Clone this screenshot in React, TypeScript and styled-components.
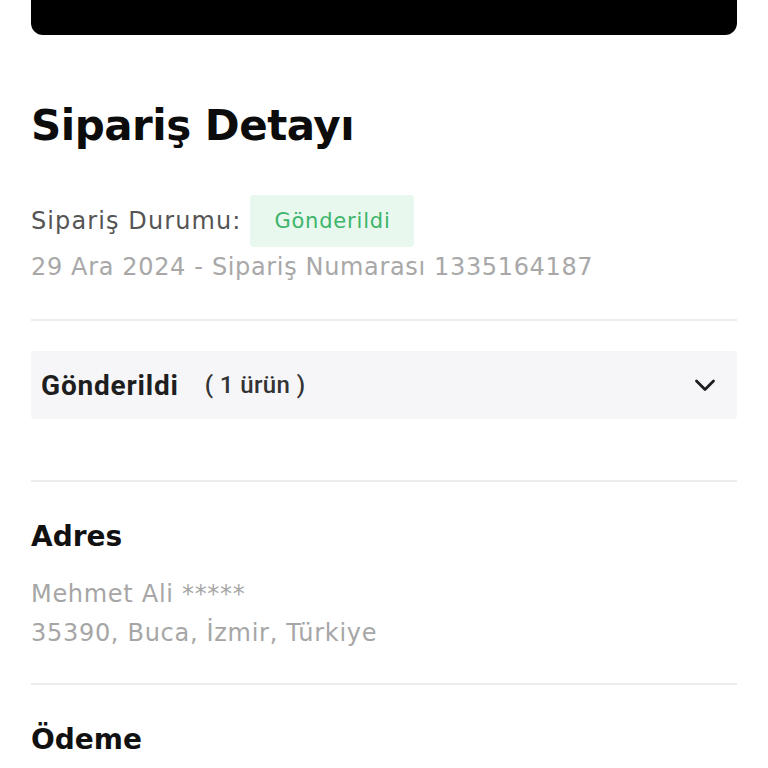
import styled, { createGlobalStyle } from "styled-components";

const GlobalStyle = createGlobalStyle`
  html, body {
    margin: 0;
    padding: 0;
    background: #ffffff;
    font-family: "DejaVu Sans", "Noto Sans", sans-serif;
  }
`;

export default () => {
  return (
    <Page>
      <GlobalStyle />
      <TopBar />
      <Title>Sipariş Detayı</Title>
      <StatusRow>
        <StatusLabel>Sipariş Durumu:</StatusLabel>
        <Badge>Gönderildi</Badge>
      </StatusRow>
      <MetaText>29 Ara 2024 - Sipariş Numarası 1335164187</MetaText>
      <Divider $top={34} />
      <Accordion>
        <AccordionTitle>
          Gönderildi
          <Count>( 1 ürün )</Count>
        </AccordionTitle>
        <svg width="24" height="24" viewBox="0 0 24 24" fill="none">
          <path
            d="M3.5 8L12 16.5L20.5 8"
            stroke="#1e1e1e"
            strokeWidth="2.8"
            strokeLinecap="round"
            strokeLinejoin="round"
          />
        </svg>
      </Accordion>
      <Divider $top={61} />
      <SectionTitle>Adres</SectionTitle>
      <Lines>
        <GrayText>Mehmet Ali *****</GrayText>
        <GrayText>35390, Buca, İzmir, Türkiye</GrayText>
      </Lines>
      <Divider $top={30} />
      <SectionTitle>Ödeme</SectionTitle>
    </Page>
  );
};

const Page = styled.div`
  display: flex;
  flex-direction: column;
  padding: 0 31px;
  height: 768px;
  overflow: hidden;
`;

const TopBar = styled.div`
  height: 35px;
  background: #000;
  border-radius: 0 0 12px 12px;
`;

const Title = styled.h1`
  margin: 64px 0 0;
  font-size: 42px;
  line-height: 54px;
  font-weight: 700;
  color: #0c0c0c;
  letter-spacing: -0.5px;
`;

const StatusRow = styled.div`
  display: flex;
  align-items: center;
  gap: 9px;
  margin-top: 42px;
`;

const StatusLabel = styled.span`
  font-size: 24px;
  letter-spacing: 1.1px;
  color: #555;
`;

const Badge = styled.span`
  display: inline-flex;
  align-items: center;
  justify-content: center;
  width: 164px;
  height: 52px;
  border-radius: 4px;
  background: #e8f8ee;
  color: #3db56a;
  font-size: 21px;
  letter-spacing: 0.8px;
`;

const MetaText = styled.div`
  font-size: 24px;
  line-height: 36px;
  letter-spacing: 0.65px;
  color: #a8a8a8;
  margin-top: 2px;
`;

const Divider = styled.div<{ $top: number }>`
  height: 2px;
  background: #ececec;
  margin-top: ${p => p.$top}px;
`;

const Accordion = styled.div`
  display: flex;
  align-items: center;
  justify-content: space-between;
  height: 68px;
  margin-top: 30px;
  padding: 0 20px 0 10px;
  background: #f6f6f9;
  border-radius: 3px;
`;

const AccordionTitle = styled.span`
  font-family: Roboto, sans-serif;
  font-size: 28px;
  font-weight: 700;
  color: #1e1e1e;
  letter-spacing: 0.8px;
  display: flex;
  align-items: center;
`;

const Count = styled.span`
  font-size: 24px;
  font-weight: 500;
  letter-spacing: 0.4px;
  color: #333;
  margin-left: 26px;
`;

const SectionTitle = styled.h2`
  margin: 37px 0 0;
  font-size: 28px;
  line-height: 36px;
  font-weight: 700;
  color: #111;
`;

const Lines = styled.div`
  display: flex;
  flex-direction: column;
  margin-top: 20px;
`;

const GrayText = styled.div`
  font-size: 24px;
  line-height: 39px;
  letter-spacing: 0.7px;
  color: #a6a6a6;
`;
